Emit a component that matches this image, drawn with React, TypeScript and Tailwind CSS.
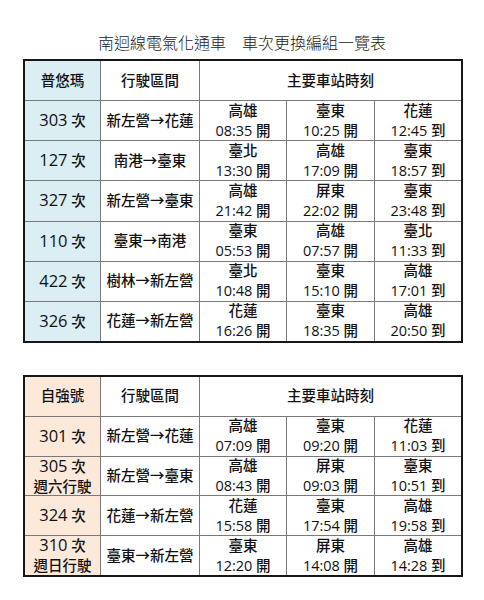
import React from "react";

type Row = { num: string; note?: string; route: string; stops: [string, string][] };

const t1: Row[] = [
  { num: "303", route: "新左營→花蓮", stops: [["高雄", "08:35 開"], ["臺東", "10:25 開"], ["花蓮", "12:45 到"]] },
  { num: "127", route: "南港→臺東", stops: [["臺北", "13:30 開"], ["高雄", "17:09 開"], ["臺東", "18:57 到"]] },
  { num: "327", route: "新左營→臺東", stops: [["高雄", "21:42 開"], ["屏東", "22:02 開"], ["臺東", "23:48 到"]] },
  { num: "110", route: "臺東→南港", stops: [["臺東", "05:53 開"], ["高雄", "07:57 開"], ["臺北", "11:33 到"]] },
  { num: "422", route: "樹林→新左營", stops: [["臺北", "10:48 開"], ["臺東", "15:10 開"], ["高雄", "17:01 到"]] },
  { num: "326", route: "花蓮→新左營", stops: [["花蓮", "16:26 開"], ["臺東", "18:35 開"], ["高雄", "20:50 到"]] },
];

const t2: Row[] = [
  { num: "301", route: "新左營→花蓮", stops: [["高雄", "07:09 開"], ["臺東", "09:20 開"], ["花蓮", "11:03 到"]] },
  { num: "305", note: "週六行駛", route: "新左營→臺東", stops: [["高雄", "08:43 開"], ["屏東", "09:03 開"], ["臺東", "10:51 到"]] },
  { num: "324", route: "花蓮→新左營", stops: [["花蓮", "15:58 開"], ["臺東", "17:54 開"], ["高雄", "19:58 到"]] },
  { num: "310", note: "週日行駛", route: "臺東→新左營", stops: [["臺東", "12:20 開"], ["屏東", "14:08 開"], ["高雄", "14:28 到"]] },
];

function Table({ title, rows, firstBg, h }: { title: string; rows: Row[]; firstBg: string; h: string }) {
  const cell = "bg-white flex flex-col items-center justify-center leading-[20px]";
  return (
    <div
      className={`ml-[23px] w-[440px] ${h} border-2 border-[#161616] bg-[#7a7a7a] grid grid-cols-[75px_98px_86px_87px_86px] auto-rows-fr gap-px`}
    >
      <div className={`${cell} ${firstBg}`}>{title}</div>
      <div className={cell}>行駛區間</div>
      <div className={`${cell} col-span-3`}>主要車站時刻</div>
      {rows.map((r, i) => (
        <React.Fragment key={i}>
          <div className={`${cell} ${firstBg}`}>
            <div>
              <span className="text-[16.5px]">{r.num}</span> 次
            </div>
            {r.note && <div>{r.note}</div>}
          </div>
          <div className={cell}>{r.route}</div>
          {r.stops.map((s, j) => (
            <div key={j} className={cell}>
              <div>{s[0]}</div>
              <div>{s[1]}</div>
            </div>
          ))}
        </React.Fragment>
      ))}
    </div>
  );
}

export default function App() {
  return (
    <div
      className="w-[484px] h-[600px] bg-white text-[#111] text-[14.5px] font-medium"
      style={{ fontFamily: '"Open Sans", "Noto Sans CJK TC", sans-serif' }}
    >
      <div
        className="pt-[32px] h-[52px] text-center text-[16px] leading-[20px] font-light text-[#222]"
        style={{ fontFamily: '"Noto Sans CJK TC", serif' }}
      >
        南迴線電氣化通車　車次更換編組一覽表
      </div>
      <div className="mt-[7px]">
        <Table title="普悠瑪" rows={t1} firstBg="!bg-[#dbeef4]" h="h-[284px]" />
      </div>
      <div className="mt-[32px]">
        <Table title="自強號" rows={t2} firstBg="!bg-[#fce9da]" h="h-[202px]" />
      </div>
    </div>
  );
}
